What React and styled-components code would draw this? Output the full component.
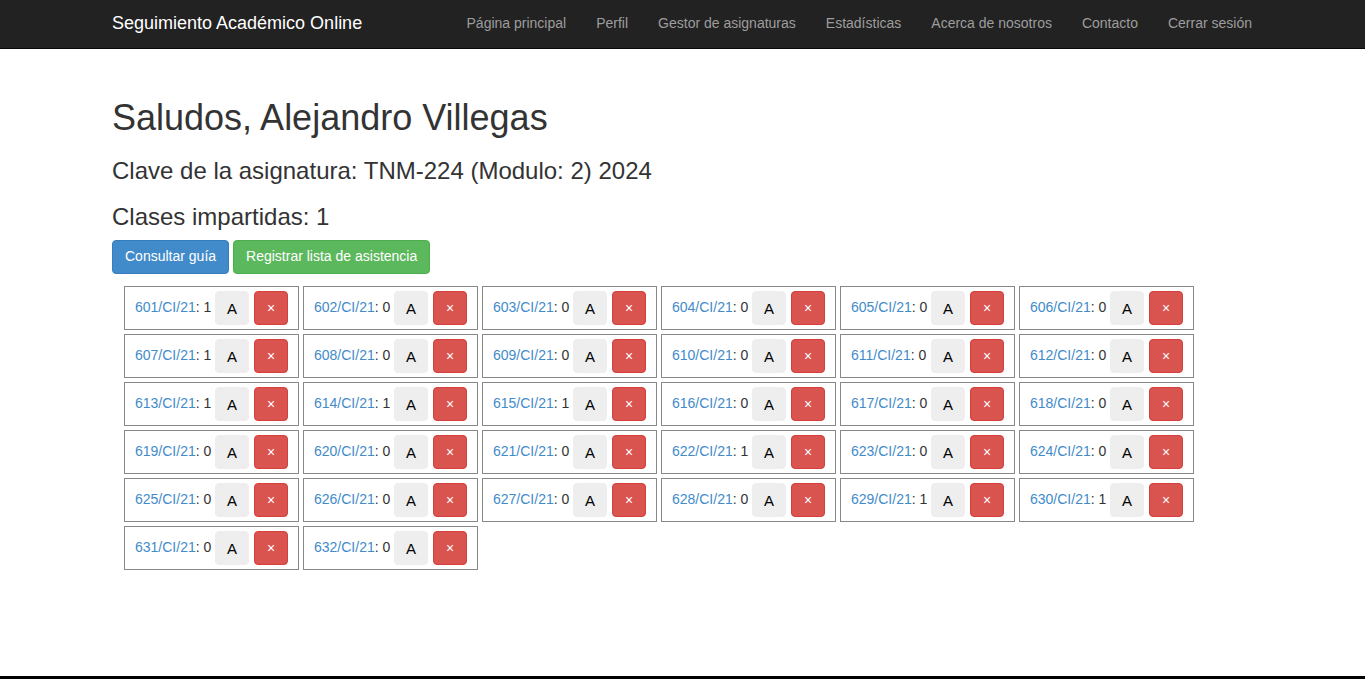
import React from 'react';
import styled, { createGlobalStyle } from 'styled-components';

const GlobalStyle = createGlobalStyle`
  html, body {
    margin: 0;
    padding: 0;
    background: #fff;
  }
  body {
    font-family: "Liberation Sans", Arial, Helvetica, sans-serif;
    font-size: 14px;
    line-height: 1.42857;
    color: #333;
  }
  * {
    box-sizing: border-box;
  }
`;

const Page = styled.div`
  min-height: 100vh;
  display: flex;
  flex-direction: column;
`;

const Navbar = styled.nav`
  height: 49px;
  background: #222;
  border-bottom: 1px solid #080808;
`;

const Container = styled.div`
  width: 1170px;
  margin: 0 auto;
  padding: 0 15.5px 0 14.5px;
`;

const NavInner = styled(Container)`
  display: flex;
  align-items: center;
  justify-content: space-between;
  height: 48px;
`;

const Brand = styled.a`
  font-size: 18px;
  line-height: 20px;
  color: #fff;
  text-decoration: none;
  margin-top: -2px;
`;

const NavLinks = styled.ul`
  display: flex;
  list-style: none;
  margin: 0 -15px 0 0;
  padding: 0;
`;

const NavLink = styled.a`
  display: block;
  padding: 0 15px;
  line-height: 20px;
  color: #9d9d9d;
  text-decoration: none;
  margin-top: -2px;
`;

const Main = styled(Container)`
  padding-top: 29px;
`;

const Title = styled.h1`
  font-size: 36px;
  font-weight: 500;
  line-height: 1.1;
  margin: 20px 0 10px;
`;

const SubTitle = styled.h3`
  font-size: 24px;
  font-weight: 500;
  line-height: 1.1;
  margin: 20px 0 10px;
`;

const ButtonRow = styled.div`
  display: flex;
  gap: 4px;
`;

const Button = styled.button`
  font-family: inherit;
  font-size: 14px;
  line-height: 1.42857;
  padding: 6px 12px;
  border-radius: 4px;
  color: #fff;
  border: 1px solid ${p => (p.$variant === 'success' ? '#4cae4c' : '#357ebd')};
  background: ${p => (p.$variant === 'success' ? '#5cb85c' : '#428bca')};
  cursor: pointer;
`;

const Grid = styled.div`
  display: grid;
  grid-template-columns: repeat(6, 175px);
  gap: 4px;
  margin-top: 12px;
  padding-left: 12px;
`;

const Card = styled.div`
  display: flex;
  align-items: center;
  height: 44px;
  padding: 0 10px;
  border: 1px solid #888;
`;

const Code = styled.a`
  color: #428bca;
  text-decoration: none;
`;

const Count = styled.span`
  color: #333;
`;

const SquareButton = styled.button`
  width: 34px;
  height: 34px;
  padding: 0;
  border-radius: 4px;
  font-family: inherit;
  cursor: pointer;
  margin-left: ${p => (p.$danger ? '5px' : 'auto')};
  background: ${p => (p.$danger ? '#d9534f' : '#eee')};
  border: 1px solid ${p => (p.$danger ? '#d43f3a' : '#eee')};
  color: ${p => (p.$danger ? '#fff' : '#000')};
  font-size: ${p => (p.$danger ? '14px' : '15px')};
`;

const Footer = styled.footer`
  margin-top: auto;
  height: 3px;
  background: #000;
`;

const counts = [
  1, 0, 0, 0, 0, 0,
  1, 0, 0, 0, 0, 0,
  1, 1, 1, 0, 0, 0,
  0, 0, 0, 1, 0, 0,
  0, 0, 0, 0, 1, 1,
  0, 0,
];

const links = [
  'Página principal',
  'Perfil',
  'Gestor de asignaturas',
  'Estadísticas',
  'Acerca de nosotros',
  'Contacto',
  'Cerrar sesión',
];

export default function App() {
  return (
    <Page>
      <GlobalStyle />
      <Navbar>
        <NavInner>
          <Brand href="#">Seguimiento Académico Online</Brand>
          <NavLinks>
            {links.map(l => (
              <li key={l}>
                <NavLink href="#">{l}</NavLink>
              </li>
            ))}
          </NavLinks>
        </NavInner>
      </Navbar>
      <Main>
        <Title>Saludos, Alejandro Villegas</Title>
        <SubTitle>Clave de la asignatura: TNM-224 (Modulo: 2) 2024</SubTitle>
        <SubTitle>Clases impartidas: 1</SubTitle>
        <ButtonRow>
          <Button>Consultar guía</Button>
          <Button $variant="success">Registrar lista de asistencia</Button>
        </ButtonRow>
        <Grid>
          {counts.map((c, i) => (
            <Card key={i}>
              <Code href="#">{601 + i}/CI/21</Code>
              <Count>: {c}</Count>
              <SquareButton>A</SquareButton>
              <SquareButton $danger>×</SquareButton>
            </Card>
          ))}
        </Grid>
      </Main>
      <Footer />
    </Page>
  );
}
